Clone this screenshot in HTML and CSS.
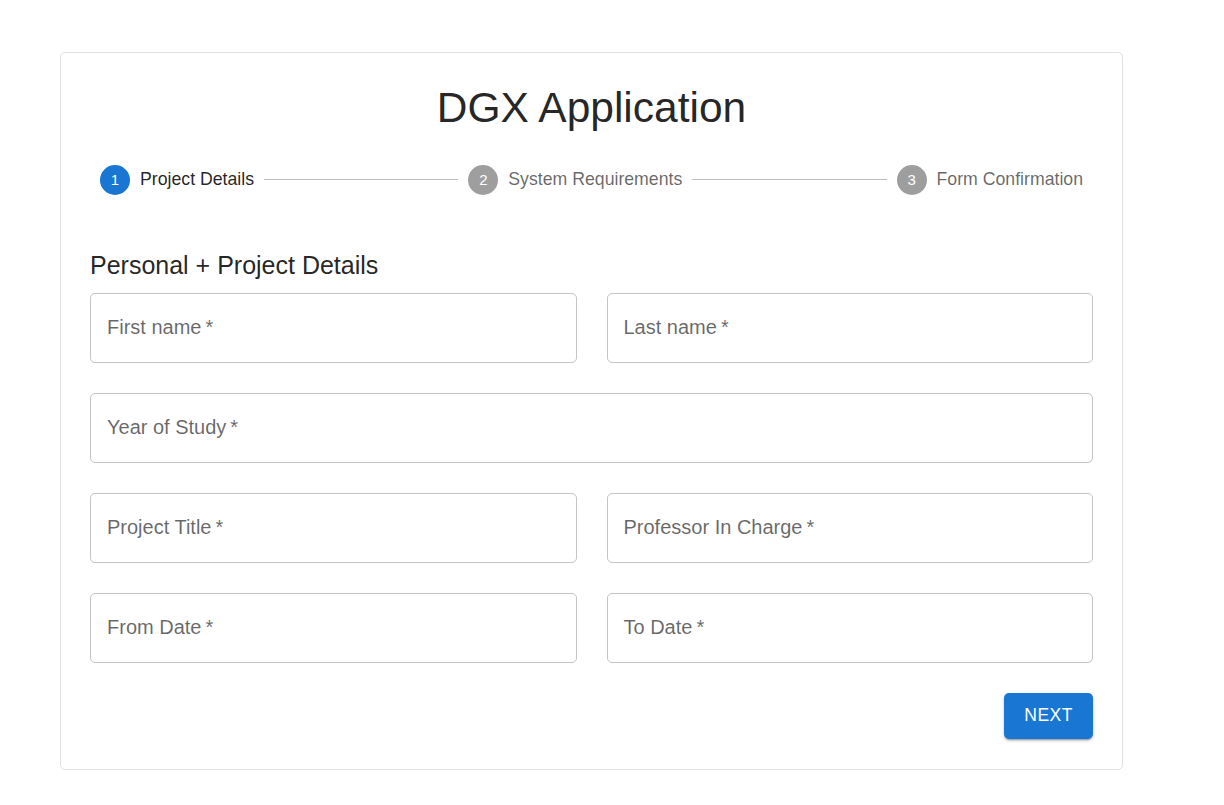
FILE: index.html
```html
<!DOCTYPE html>
<html lang="en">
<head>
<meta charset="utf-8">
<title>DGX Application</title>
<link rel="stylesheet" href="styles.css">
</head>
<body>
<div class="page">
  <div class="card">
    <h1 class="title">DGX Application</h1>
    <div class="stepper">
      <div class="step active">
        <span class="step-icon">1</span>
        <span class="step-label">Project Details</span>
      </div>
      <div class="connector"></div>
      <div class="step">
        <span class="step-icon">2</span>
        <span class="step-label">System Requirements</span>
      </div>
      <div class="connector"></div>
      <div class="step">
        <span class="step-icon">3</span>
        <span class="step-label">Form Confirmation</span>
      </div>
    </div>
    <h2 class="section">Personal + Project Details</h2>
    <div class="grid">
      <div class="field"><span class="label">First name&thinsp;*</span></div>
      <div class="field"><span class="label">Last name&thinsp;*</span></div>
      <div class="field full"><span class="label">Year of Study&thinsp;*</span></div>
      <div class="field"><span class="label">Project Title&thinsp;*</span></div>
      <div class="field"><span class="label">Professor In Charge&thinsp;*</span></div>
      <div class="field"><span class="label">From Date&thinsp;*</span></div>
      <div class="field"><span class="label">To Date&thinsp;*</span></div>
    </div>
    <div class="actions">
      <button class="btn">NEXT</button>
    </div>
  </div>
</div>
</body>
</html>
```

FILE: styles.css
```css
* { box-sizing: border-box; }
html, body { margin: 0; padding: 0; background: #fff; }
body {
  font-family: "Liberation Sans", Arial, sans-serif;
  color: rgba(0,0,0,0.87);
}
.page {
  padding: 52px 0 0 60px;
}
.card {
  width: 1063px;
  border: 1px solid #e0e0e0;
  border-radius: 5px;
  padding: 29px 29px 30px 29px;
}
.title {
  margin: 0;
  text-align: center;
  font-size: 42.5px;
  font-weight: 400;
  line-height: 52.5px;
  color: rgba(0,0,0,0.87);
}
.stepper {
  margin-top: 30px;
  display: flex;
  align-items: center;
}
.step {
  display: flex;
  align-items: center;
  padding: 0 10px;
}
.step-icon {
  width: 30px;
  height: 30px;
  border-radius: 50%;
  background: #9e9e9e;
  color: #fff;
  font-size: 15px;
  display: flex;
  align-items: center;
  justify-content: center;
}
.step.active .step-icon { background: #1976d2; }
.step-label {
  padding-left: 10px;
  font-size: 17.7px;
  color: rgba(0,0,0,0.6);
}
.step.active .step-label { color: rgba(0,0,0,0.87); }
.connector {
  flex: 1;
  border-top: 1px solid #bdbdbd;
}
.section {
  margin: 50px 0 8px;
  font-size: 25px;
  font-weight: 400;
  line-height: 40px;
}
.grid {
  display: grid;
  grid-template-columns: 1fr 1fr;
  gap: 30px;
}
.field {
  height: 70px;
  border: 1px solid #c4c4c4;
  border-radius: 5px;
  display: flex;
  align-items: center;
  padding-left: 16px;
}
.field.full { grid-column: 1 / span 2; }
.label {
  font-size: 20px;
  color: rgba(0,0,0,0.6);
}
.actions {
  display: flex;
  justify-content: flex-end;
  margin-top: 30px;
}
.btn {
  font-family: "Liberation Sans", Arial, sans-serif;
  background: #1976d2;
  color: #fff;
  border: none;
  border-radius: 5px;
  height: 46px;
  padding: 0 20px;
  font-size: 17.5px;
  font-weight: 500;
  letter-spacing: 0.5px;
  box-shadow: 0 3px 1px -2px rgba(0,0,0,0.2), 0 2px 2px 0 rgba(0,0,0,0.14), 0 1px 5px 0 rgba(0,0,0,0.12);
}
```
